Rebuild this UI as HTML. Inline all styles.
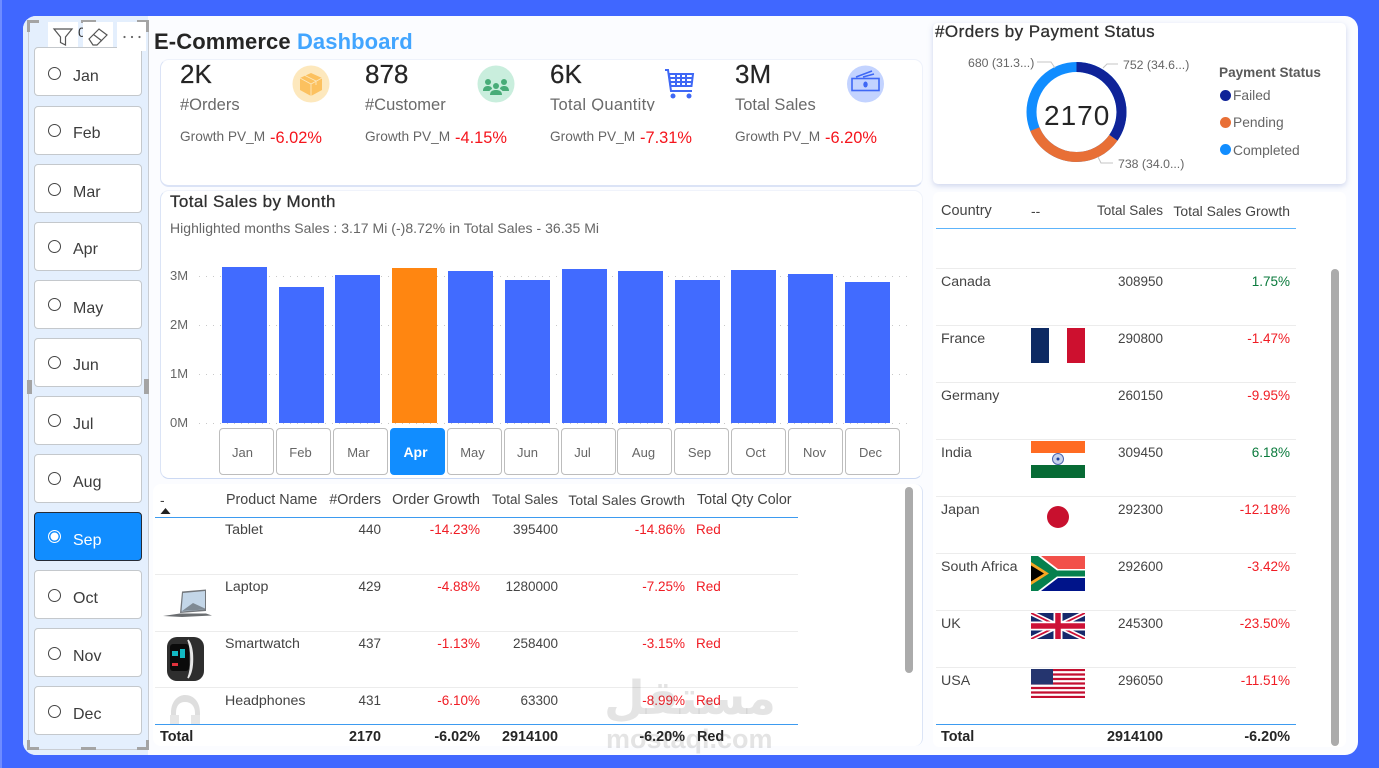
<!DOCTYPE html>
<html><head><meta charset="utf-8"><style>
html,body{margin:0;padding:0;width:1379px;height:768px;overflow:hidden;background:#4067ff}
body{position:relative;font-family:"Liberation Sans","Noto Sans CJK SC",sans-serif;color:#333}
div,span.a,svg{position:absolute}
.t{position:absolute;white-space:nowrap;line-height:20px;height:20px}
.s{font-size:13.5px;color:#444;transform:translateY(1px)}
.l{font-size:14.2px}
.h{font-size:13.9px;color:#444;transform:translateY(1px)}
.r{color:#f01c24}.g{color:#0a7a3c}.b{font-weight:bold;color:#252525;font-size:14.4px}
.btn{left:34px;width:106px;height:47px;background:#fff;border:1px solid #c4c8cc;border-radius:4px}
.rad{left:48px;width:11px;height:11px;border:1.3px solid #444;border-radius:50%}
.m{left:73px;font-size:16px;color:#3c3c3c;transform:translateY(2px)}
.bar{background:#416bff;width:45px;bottom:345px}
.mb{top:428px;height:45px;width:53px;background:#fff;border:1px solid #bdbdbd;border-radius:4px;font-size:13px;color:#666;text-align:center;line-height:47px;box-sizing:content-box}
.ax{font-size:13px;color:#666;left:170px}
.gl{left:199px;width:711px;height:1px;background:repeating-linear-gradient(90deg,#c8c8c8 0 1px,transparent 1px 7px)}
.ln{height:1px;background:#ececec}
.k1{font-size:26px;color:#252525;transform:translateY(1px);-webkit-text-stroke:.2px #252525}
.k2{font-size:16.5px;color:#6a6a6a;transform:translateY(1px)}
.k3{font-size:13.7px;color:#666}
.k4{font-size:16.4px;color:#f5141c;transform:translateY(1px)}
.hd{background:#a4a4a4}
</style></head><body>
<div style="left:0;top:0;width:2px;height:768px;background:#6f8cff"></div>
<div style="left:23px;top:16px;width:1335px;height:739px;background:#fbfcff;border-radius:13px"></div>

<!-- slicer -->
<div style="left:23px;top:16px;width:125px;height:739px;background:#e4effd;border-radius:13px 0 0 13px"></div>
<div style="left:28px;top:21px;width:119px;height:728px;border:1px solid #c9cdd3;border-top:none"></div>
<div class="btn" style="top:47px"></div><div class="rad" style="top:67px"></div><div class="t m" style="top:65px">Jan</div>
<div class="btn" style="top:106px"></div><div class="rad" style="top:124px"></div><div class="t m" style="top:122px">Feb</div>
<div class="btn" style="top:164px"></div><div class="rad" style="top:183px"></div><div class="t m" style="top:181px">Mar</div>
<div class="btn" style="top:222px"></div><div class="rad" style="top:240px"></div><div class="t m" style="top:238px">Apr</div>
<div class="btn" style="top:280px"></div><div class="rad" style="top:298px"></div><div class="t m" style="top:297px">May</div>
<div class="btn" style="top:338px"></div><div class="rad" style="top:356px"></div><div class="t m" style="top:354px">Jun</div>
<div class="btn" style="top:396px"></div><div class="rad" style="top:414px"></div><div class="t m" style="top:413px">Jul</div>
<div class="btn" style="top:454px"></div><div class="rad" style="top:472px"></div><div class="t m" style="top:471px">Aug</div>
<div class="btn" style="top:512px;background:#118dff;border-color:#252b36"></div><div class="rad" style="top:530px;border-color:#fff;background:#fff;box-shadow:inset 0 0 0 1.5px #118dff"></div><div class="t m" style="top:529px;color:#fff">Sep</div>
<div class="btn" style="top:570px"></div><div class="rad" style="top:589px"></div><div class="t m" style="top:587px">Oct</div>
<div class="btn" style="top:628px"></div><div class="rad" style="top:647px"></div><div class="t m" style="top:645px">Nov</div>
<div class="btn" style="top:686px"></div><div class="rad" style="top:705px"></div><div class="t m" style="top:703px">Dec</div>

<!-- handles -->
<div class="hd" style="left:27px;top:20px;width:12px;height:3px"></div><div class="hd" style="left:27px;top:20px;width:3px;height:12px"></div>
<div class="hd" style="left:81px;top:20px;width:15px;height:3px"></div>
<div class="hd" style="left:137px;top:20px;width:12px;height:3px"></div><div class="hd" style="left:146px;top:20px;width:3px;height:12px"></div>
<div class="hd" style="left:27px;top:380px;width:5px;height:14px"></div><div class="hd" style="left:144px;top:379px;width:5px;height:15px"></div>
<div class="hd" style="left:27px;top:747px;width:12px;height:3px"></div><div class="hd" style="left:27px;top:740px;width:3px;height:10px"></div>
<div class="hd" style="left:81px;top:747px;width:15px;height:3px"></div>
<div class="hd" style="left:137px;top:747px;width:12px;height:3px"></div><div class="hd" style="left:146px;top:740px;width:3px;height:10px"></div>
<div style="left:48px;top:22px;width:30px;height:25px;background:#fff"></div>
<div class="t" style="left:78px;top:22px;font-size:14px;color:#333">0</div>
<div style="left:83px;top:22px;width:30px;height:25px;background:#fff"></div>
<div style="left:117px;top:22px;width:29px;height:29px;background:#fff"></div>
<svg style="left:52px;top:27px" width="22" height="20" viewBox="0 0 22 20"><path d="M2 2H20L13.5 10V18L8.5 15.5V10Z" fill="none" stroke="#555" stroke-width="1.2"/></svg>
<svg style="left:86px;top:26px" width="24" height="22" viewBox="0 0 24 22"><path d="M3 13L13 3L21 9L11 19H7ZM7.500 8.500L16 15" fill="none" stroke="#555" stroke-width="1.2"/></svg>
<svg style="left:122px;top:34px" width="20" height="6" viewBox="0 0 20 6"><circle cx="2.500" cy="3" r="1.100" fill="#666"/><circle cx="10" cy="3" r="1.100" fill="#666"/><circle cx="17.500" cy="3" r="1.100" fill="#666"/></svg>

<!-- title -->
<div class="t b" style="left:154px;top:31px;font-size:22px;line-height:22px;height:24px;color:#252525;letter-spacing:.1px">E-Commerce <span style="color:#42a5ff">Dashboard</span></div>

<!-- KPI card -->
<div style="left:160px;top:59px;width:761px;height:125px;background:#fff;border-radius:9px;border:1px solid #eef2fb;border-bottom:2px solid #dbe3f6;border-left-color:#dbe3f6;box-sizing:content-box"></div>
<div class="t k1" style="left:180px;top:63px">2K</div><div class="t k2" style="left:180px;top:94px">#Orders</div><div class="t k3" style="left:180px;top:127px">Growth PV_M</div><div class="t k4" style="left:270px;top:127px">-6.02%</div>
<div class="t k1" style="left:365px;top:63px">878</div><div class="t k2" style="left:365px;top:94px">#Customer</div><div class="t k3" style="left:365px;top:127px">Growth PV_M</div><div class="t k4" style="left:455px;top:127px">-4.15%</div>
<div class="t k1" style="left:550px;top:63px">6K</div><div class="t k2" style="left:550px;top:94px;width:106px;height:16px;overflow:hidden;letter-spacing:.3px">Total Quantity</div><div class="t k3" style="left:550px;top:127px">Growth PV_M</div><div class="t k4" style="left:640px;top:127px">-7.31%</div>
<div class="t k1" style="left:735px;top:63px">3M</div><div class="t k2" style="left:735px;top:94px">Total Sales</div><div class="t k3" style="left:735px;top:127px">Growth PV_M</div><div class="t k4" style="left:825px;top:127px">-6.20%</div>

<svg style="left:292px;top:65px" width="38" height="38" viewBox="0 0 38 38"><circle cx="19" cy="19" r="18.500" fill="#fde8bd"/><path d="M19 8L30 13V25L19 31L8 25V13Z" fill="#fcc15f"/><path d="M8 13L19 19L30 13M19 19V31M13 10.500L24 16V20" fill="none" stroke="#fde8bd" stroke-width=".9"/></svg>
<svg style="left:477px;top:65px" width="38" height="38" viewBox="0 0 38 38"><circle cx="19" cy="19" r="18.500" fill="#c9eedd"/><g fill="#48ac78"><circle cx="11" cy="17" r="3"/><circle cx="27" cy="17" r="3"/><circle cx="19" cy="21" r="3"/><path d="M6 26C6 21 10 21 11 21C13 21 15 22 15 24C13 25 12.500 26 12.500 26ZM32 26C32 21 28 21 27 21C25 21 23 22 23 24C25 25 25.500 26 25.500 26Z"/><path d="M13 30C13 26 16 25 19 25C22 25 25 26 25 30Z"/></g></svg>
<svg style="left:664px;top:67px" width="32" height="34" viewBox="0 0 32 34"><g fill="none" stroke="#3f68f5" stroke-width="2"><path d="M1 3H4L7 24H28"/><path d="M5 7H29L27.500 19H6.500ZM12 7V19M17 7V19M22 7V19M6 11H28.500M6 15H28"/></g><circle cx="9" cy="29" r="2.500" fill="#3f68f5"/><circle cx="25" cy="29" r="2.500" fill="#3f68f5"/></svg>
<svg style="left:847px;top:65px" width="38" height="38" viewBox="0 0 38 38"><circle cx="18.500" cy="19" r="18.500" fill="#c3d3ff"/><g fill="none" stroke="#3f68f5" stroke-width="1.600"><rect x="5" y="13.500" width="27" height="12"/><path d="M9 12L25 6M16 12L27 9"/></g><ellipse cx="18.500" cy="19.500" rx="2.200" ry="3" fill="#3f68f5"/></svg>

<!-- chart card -->
<div style="left:160px;top:190px;width:761px;height:287px;background:#fff;border-radius:9px;border:1px solid #f0f3fb;border-bottom:1px solid #ccd9f3;border-left-color:#dbe4f6"></div>
<div class="t" style="left:170px;top:192px;font-size:17px;color:#303030;letter-spacing:.4px;-webkit-text-stroke:.3px #303030">Total Sales by Month</div>
<div class="t" style="left:170px;top:218px;font-size:14px;color:#666;letter-spacing:.03px">Highlighted months Sales : 3.17 Mi (-)8.72% in Total Sales - 36.35 Mi</div>
<div class="t ax" style="top:266px">3M</div><div class="t ax" style="top:315px">2M</div><div class="t ax" style="top:364px">1M</div><div class="t ax" style="top:413px">0M</div>
<div class="gl" style="top:276px"></div><div class="gl" style="top:325px"></div><div class="gl" style="top:374px"></div><div class="gl" style="top:423px"></div>
<div class="bar" style="left:222px;top:267px"></div>
<div class="bar" style="left:279px;top:287px"></div>
<div class="bar" style="left:335px;top:275px"></div>
<div class="bar" style="left:392px;top:268px;background:#ff8611"></div>
<div class="bar" style="left:448px;top:271px"></div>
<div class="bar" style="left:505px;top:280px"></div>
<div class="bar" style="left:562px;top:269px"></div>
<div class="bar" style="left:618px;top:271px"></div>
<div class="bar" style="left:675px;top:280px"></div>
<div class="bar" style="left:731px;top:270px"></div>
<div class="bar" style="left:788px;top:274px"></div>
<div class="bar" style="left:845px;top:282px"></div>
<div class="mb" style="left:219px;width:45px;padding-right:8px">Jan</div>
<div class="mb" style="left:276px;width:47px;padding-right:6px">Feb</div>
<div class="mb" style="left:333px;width:49px;padding-right:4px">Mar</div>
<div class="mb" style="left:390px;width:49px;padding-right:4px;background:#118dff;border-color:#118dff;color:#fff;font-size:14px;font-weight:bold">Apr</div>
<div class="mb" style="left:447px;width:49px;padding-right:4px">May</div>
<div class="mb" style="left:504px;width:45px;padding-right:8px">Jun</div>
<div class="mb" style="left:561px;width:41px;padding-right:12px">Jul</div>
<div class="mb" style="left:617px;width:51px;padding-right:2px">Aug</div>
<div class="mb" style="left:674px;width:49px;padding-right:4px">Sep</div>
<div class="mb" style="left:731px;width:47px;padding-right:6px">Oct</div>
<div class="mb" style="left:788px;width:51px;padding-right:2px">Nov</div>
<div class="mb" style="left:845px;width:49px;padding-right:4px">Dec</div>

<!-- product table -->
<div style="left:153px;top:484px;width:769px;height:262px;background:#fff;border-radius:8px;border-right:1px solid #dbe4f6"></div>
<div class="t h" style="left:160px;top:489px">-</div>
<svg style="left:160px;top:508px" width="11" height="6" viewBox="0 0 11 6"><path d="M5.500 0L10.500 6H.5Z" fill="#222"/></svg>
<div class="t h" style="left:226px;top:489px;font-size:14.3px">Product Name</div>
<div class="t h" style="right:998px;top:489px;font-size:14.3px">#Orders</div>
<div class="t h" style="right:899px;top:489px;font-size:14.5px">Order Growth</div>
<div class="t h" style="right:821px;top:489px;font-size:13.5px">Total Sales</div>
<div class="t h" style="right:694px;top:489px">Total Sales Growth</div>
<div class="t h" style="left:697px;top:489px;font-size:14.3px">Total Qty Color</div>
<div style="left:155px;top:517px;width:643px;height:1px;background:#3d9bf0"></div>
<div class="ln" style="left:155px;top:574px;width:643px"></div>
<div class="ln" style="left:155px;top:631px;width:643px"></div>
<div class="ln" style="left:155px;top:687px;width:643px"></div>

<div class="t s l" style="left:225px;top:519px">Tablet</div><div class="t s" style="right:998px;top:519px">440</div><div class="t s r" style="right:899px;top:519px">-14.23%</div><div class="t s" style="right:821px;top:519px">395400</div><div class="t s r" style="right:694px;top:519px">-14.86%</div><div class="t s r" style="left:696px;top:519px">Red</div>
<div class="t s l" style="left:225px;top:576px">Laptop</div><div class="t s" style="right:998px;top:576px">429</div><div class="t s r" style="right:899px;top:576px">-4.88%</div><div class="t s" style="right:821px;top:576px">1280000</div><div class="t s r" style="right:694px;top:576px">-7.25%</div><div class="t s r" style="left:696px;top:576px">Red</div>
<div class="t s l" style="left:225px;top:633px">Smartwatch</div><div class="t s" style="right:998px;top:633px">437</div><div class="t s r" style="right:899px;top:633px">-1.13%</div><div class="t s" style="right:821px;top:633px">258400</div><div class="t s r" style="right:694px;top:633px">-3.15%</div><div class="t s r" style="left:696px;top:633px">Red</div>
<div class="t s l" style="left:225px;top:690px">Headphones</div><div class="t s" style="right:998px;top:690px">431</div><div class="t s r" style="right:899px;top:690px">-6.10%</div><div class="t s" style="right:821px;top:690px">63300</div><div class="t s r" style="right:694px;top:690px">-8.99%</div><div class="t s r" style="left:696px;top:690px">Red</div>

<svg style="left:162px;top:588px" width="52" height="32" viewBox="0 0 52 32"><path d="M20 3.500L44 1.500L44 23L18 25Z" fill="#73777c"/><path d="M21 5L43 3L43 21.500L19.500 23.500Z" fill="#c3d6e8"/><path d="M20 23L31 15L43 20.500V21.500Z" fill="#7f8a94"/><path d="M1 28L18 25.500H44L50 27.500L20 29Z" fill="#6a6d70"/></svg>
<svg style="left:165px;top:636px" width="42" height="47" viewBox="0 0 42 47"><rect x="2" y="1" width="37" height="44" rx="10" fill="#2e2e2e"/><rect x="5" y="8" width="19" height="27" rx="3" fill="#0b0b0b"/><path d="M7 15H13V20H7ZM15 13H20V22H15Z" fill="#12b9c3"/><path d="M7 27H13V30H7Z" fill="#e0323c"/><path d="M23 4C27 14 27 32 23 42C29 34 29 12 23 4Z" fill="#e8e8e8" stroke="#e8e8e8" stroke-width="1.500"/></svg>
<svg style="left:167px;top:694px" width="36" height="30" viewBox="0 0 36 30"><path d="M4 30V19C4 6 12 1 18 1C26 1 33 7 33 19V30H28V19C28 12 24 8 18 8C12 8 9 12 9 19V30Z" fill="#dedede"/><path d="M3 21H12V30H3ZM24 21H33V30H24Z" fill="#e6e6e6"/></svg>

<div style="left:155px;top:724px;width:643px;height:1px;background:#3d9bf0"></div>
<div class="t s b" style="left:160px;top:726px">Total</div><div class="t s b" style="right:998px;top:726px">2170</div><div class="t s b" style="right:899px;top:726px">-6.02%</div><div class="t s b" style="right:821px;top:726px">2914100</div><div class="t s b" style="right:694px;top:726px">-6.20%</div><div class="t s b" style="left:697px;top:726px">Red</div>
<div style="left:905px;top:487px;width:8px;height:186px;background:#ababab;border-radius:4px"></div>

<!-- donut card -->
<div style="left:933px;top:23px;width:413px;height:161px;background:#fff;border-radius:5px;box-shadow:0 2px 6px rgba(120,140,200,.35)"></div>
<div class="t" style="left:935px;top:22px;font-size:17px;color:#303030;letter-spacing:.45px;-webkit-text-stroke:.3px #303030">#Orders by Payment Status</div>
<svg style="left:960px;top:50px" width="240" height="125" viewBox="960 50 240 125"><g fill="none" stroke-width="10" transform="rotate(-90 1076.500 112)"><circle cx="1076.500" cy="112" r="45" stroke="#118dff"/><circle cx="1076.500" cy="112" r="45" stroke="#0f2398" stroke-dasharray="97.900 300"/><circle cx="1076.500" cy="112" r="45" stroke="#e86f36" stroke-dasharray="96.300 300" stroke-dashoffset="-97.900"/></g><path d="M1103 68L1107 64H1118M1055 68L1051 62H1037M1098 157L1101 163H1113" fill="none" stroke="#c4c4c4"/></svg>
<div class="t" style="left:1044px;top:105px;height:22px;font-size:28px;line-height:22px;color:#252525;letter-spacing:1px">2170</div>
<div class="t" style="left:968px;top:53px;font-size:12.3px;color:#666">680 (31.3...)</div>
<div class="t" style="left:1123px;top:55px;font-size:12.3px;color:#666">752 (34.6...)</div>
<div class="t" style="left:1118px;top:154px;font-size:12.3px;color:#666">738 (34.0...)</div>
<div class="t" style="left:1219px;top:63px;font-size:13.6px;font-weight:bold;color:#5a5a5a">Payment Status</div>
<div style="left:1220px;top:90px;width:11px;height:11px;border-radius:50%;background:#0f2398"></div><div class="t" style="left:1233px;top:86px;font-size:13.8px;color:#666">Failed</div>
<div style="left:1220px;top:117px;width:11px;height:11px;border-radius:50%;background:#e86f36"></div><div class="t" style="left:1233px;top:113px;font-size:13.8px;color:#666">Pending</div>
<div style="left:1220px;top:144px;width:11px;height:11px;border-radius:50%;background:#118dff"></div><div class="t" style="left:1233px;top:141px;font-size:13.8px;color:#666">Completed</div>

<!-- country table -->
<div style="left:933px;top:192px;width:413px;height:555px;background:#fff;border-radius:6px"></div>
<div class="t h" style="left:941px;top:200px;font-size:14.5px">Country</div>
<div class="t h" style="left:1031px;top:200px">--</div>
<div class="t h" style="right:216px;top:200px;font-size:13.5px">Total Sales</div>
<div class="t h" style="right:89px;top:200px">Total Sales Growth</div>
<div style="left:936px;top:228px;width:360px;height:1px;background:#5db4fb"></div>
<div class="ln" style="left:936px;top:268px;width:360px"></div>
<div class="ln" style="left:936px;top:325px;width:360px"></div>
<div class="ln" style="left:936px;top:382px;width:360px"></div>
<div class="ln" style="left:936px;top:439px;width:360px"></div>
<div class="ln" style="left:936px;top:496px;width:360px"></div>
<div class="ln" style="left:936px;top:553px;width:360px"></div>
<div class="ln" style="left:936px;top:610px;width:360px"></div>
<div class="ln" style="left:936px;top:667px;width:360px"></div>

<div class="t s l" style="left:941px;top:271px">Canada</div><div class="t s" style="right:216px;top:271px">308950</div><div class="t s g" style="right:89px;top:271px">1.75%</div>
<div class="t s l" style="left:941px;top:328px">France</div><div class="t s" style="right:216px;top:328px">290800</div><div class="t s r" style="right:89px;top:328px">-1.47%</div>
<div class="t s l" style="left:941px;top:385px">Germany</div><div class="t s" style="right:216px;top:385px">260150</div><div class="t s r" style="right:89px;top:385px">-9.95%</div>
<div class="t s l" style="left:941px;top:442px">India</div><div class="t s" style="right:216px;top:442px">309450</div><div class="t s g" style="right:89px;top:442px">6.18%</div>
<div class="t s l" style="left:941px;top:499px">Japan</div><div class="t s" style="right:216px;top:499px">292300</div><div class="t s r" style="right:89px;top:499px">-12.18%</div>
<div class="t s l" style="left:941px;top:556px">South Africa</div><div class="t s" style="right:216px;top:556px">292600</div><div class="t s r" style="right:89px;top:556px">-3.42%</div>
<div class="t s l" style="left:941px;top:613px">UK</div><div class="t s" style="right:216px;top:613px">245300</div><div class="t s r" style="right:89px;top:613px">-23.50%</div>
<div class="t s l" style="left:941px;top:670px">USA</div><div class="t s" style="right:216px;top:670px">296050</div><div class="t s r" style="right:89px;top:670px">-11.51%</div>

<svg style="left:1031px;top:328px" width="54" height="35" viewBox="0 0 54 35"><rect width="18" height="35" fill="#0d2a63"/><rect x="36" width="18" height="35" fill="#cd102f"/></svg>
<svg style="left:1031px;top:441px" width="54" height="37" viewBox="0 0 54 37"><rect width="54" height="12" fill="#ff6b22"/><rect y="24" width="54" height="13" fill="#076b35"/><circle cx="27" cy="18" r="5.500" fill="#c6d2ec" stroke="#4d65ad"/><circle cx="27" cy="18" r="1.500" fill="#1d3d9a"/></svg>
<svg style="left:1046px;top:505px" width="24" height="24" viewBox="0 0 24 24"><circle cx="12" cy="12" r="11" fill="#c8102e"/></svg>
<svg style="left:1031px;top:556px" width="54" height="35" viewBox="0 0 54 35"><rect width="54" height="17" fill="#f2504a"/><rect y="17" width="54" height="18" fill="#00148a"/><path d="M0 0H10L27 13H54V22H27L10 35H0Z" fill="#fff"/><path d="M0 0H7L26 14.500H54V20.500H26L7 35H0Z" fill="#05804e"/><path d="M0 6L18 17.500L0 29Z" fill="#f5a623"/><path d="M0 9.500L13 17.500L0 25.500Z" fill="#000"/></svg>
<svg style="left:1031px;top:613px" width="54" height="26" viewBox="0 0 54 26"><rect width="54" height="26" fill="#16296b"/><path d="M0 0L54 26M54 0L0 26" stroke="#fff" stroke-width="5"/><path d="M0 0L54 26M54 0L0 26" stroke="#cd1237" stroke-width="1.800"/><path d="M27 0V26M0 13H54" stroke="#fff" stroke-width="9"/><path d="M27 0V26M0 13H54" stroke="#cd1237" stroke-width="5.500"/></svg>
<svg style="left:1031px;top:669px" width="54" height="29" viewBox="0 0 54 29"><rect width="54" height="29" fill="#fff"/><path d="M0 1H54M0 5.500H54M0 10H54M0 14.500H54M0 19H54M0 23.500H54M0 28H54" stroke="#c40f30" stroke-width="2.200"/><rect width="22" height="15.500" fill="#25356f"/></svg>

<div style="left:936px;top:724px;width:360px;height:1px;background:#3d9bf0"></div>
<div class="t s b" style="left:941px;top:726px">Total</div><div class="t s b" style="right:216px;top:726px">2914100</div><div class="t s b" style="right:89px;top:726px">-6.20%</div>
<div style="left:1331px;top:269px;width:8px;height:477px;background:#ababab;border-radius:4px"></div>

<!-- watermark -->
<div class="t" style="left:600px;top:668px;width:180px;height:62px;line-height:62px;font-family:'DejaVu Sans',sans-serif;font-weight:bold;font-size:47px;color:rgba(90,90,90,.16);text-align:center">مستقل</div>
<div class="t" style="left:606px;top:724px;height:30px;line-height:30px;font-family:'Liberation Sans',sans-serif;font-weight:bold;font-size:27px;color:rgba(90,90,90,.16)">mostaql.com</div>
</body></html>
